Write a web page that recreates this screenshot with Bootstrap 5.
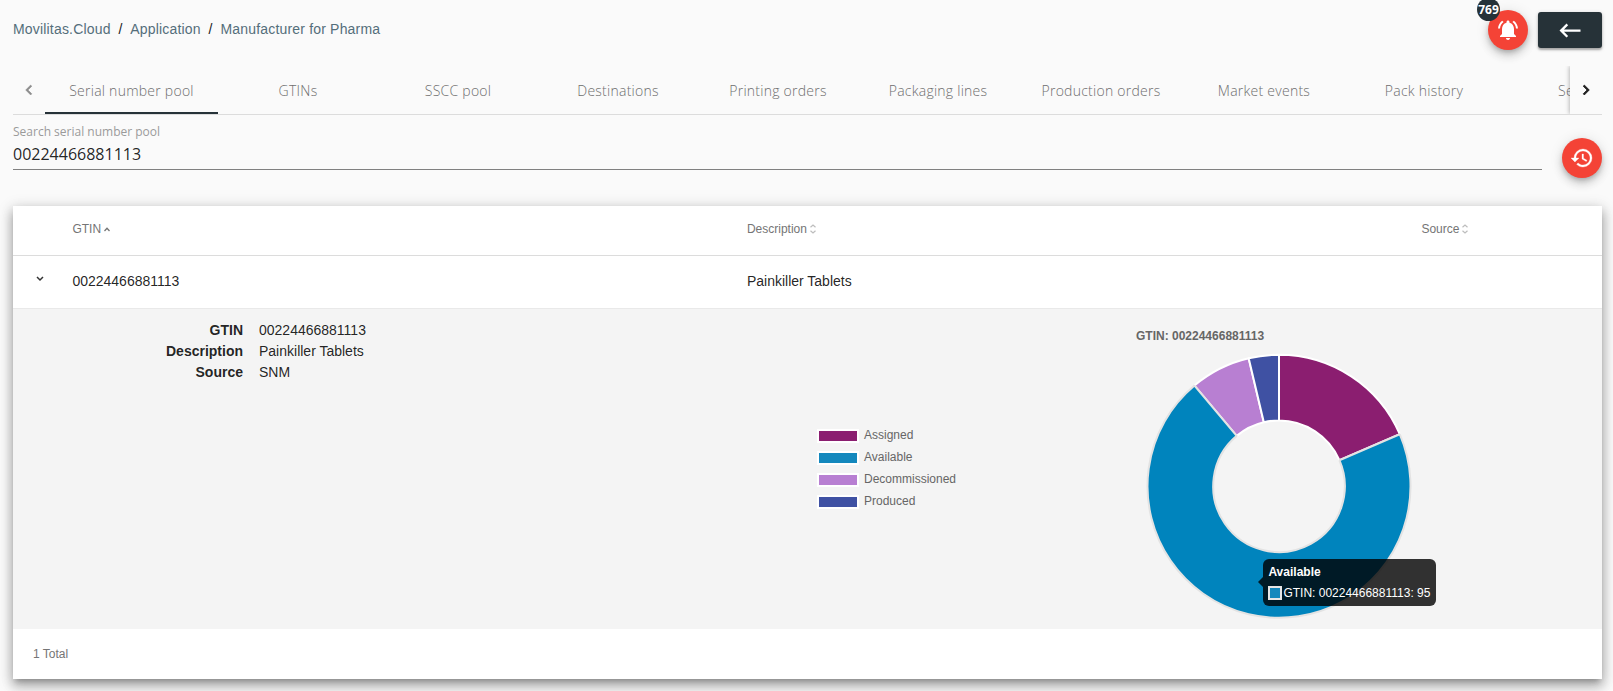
<!DOCTYPE html>
<html lang="en">
<head>
<meta charset="utf-8">
<meta name="viewport" content="width=device-width, initial-scale=1">
<title>Manufacturer for Pharma</title>
<link href="https://cdn.jsdelivr.net/npm/bootstrap@5.3.0/dist/css/bootstrap.min.css" rel="stylesheet">
<style>
  body { background: #fafafa; font-family: "Liberation Sans", Arial, sans-serif; font-size: 14px; line-height: 20px; color: rgba(0,0,0,.87); overflow: hidden; }
  .page { padding: 0 11px 0 13px; height: 691px; }
  .topbar { height: 66px; }
  .crumbs { margin-top: 19px; letter-spacing: .18px; --bs-breadcrumb-divider-color: #212121; --bs-breadcrumb-item-padding-x: 7.8px; font-size: 14px; }
  .crumbs a { color: #546e7a; text-decoration: none; }
  .fab { width: 40px; height: 40px; border-radius: 50%; background: #f44336; color: #fff; border: 0; box-shadow: 0 3px 5px -1px rgba(0,0,0,.2), 0 6px 10px rgba(0,0,0,.14), 0 1px 14px rgba(0,0,0,.1); }
  .fab svg, .back svg, .pager svg { fill: currentColor; display: block; }
  .count { position: absolute; left: -11px; top: -12px; width: 23px; height: 23px; border-radius: 50%; background: #263238; font: 700 12px/23px "Open Sans", sans-serif; color: #fff; text-align: center; }
  .back { width: 64px; height: 36px; margin-top: 12px; border-radius: 3px; background: #263238; color: #fff; border: 0; box-shadow: 0 2px 2px rgba(0,0,0,.25), 0 1px 4px rgba(0,0,0,.18); }
  .tabs { height: 49px; border-bottom: 1px solid #dcdcdc; font-family: "Open Sans", sans-serif; font-size: 14px; }
  .pager { width: 32px; flex: none; }
  .pager-next { box-shadow: -1px 0 4px rgba(0,0,0,.25); background: #fafafa; clip-path: inset(0 0 0 -8px); z-index: 1; }
  .tab-strip { min-width: 0; overflow: hidden; }
  .tab-strip .nav-link { flex: none; width: 160px; padding: 2px 0 0; line-height: 46px; letter-spacing: .25px; text-align: center; color: #6e6e6e; font-weight: 300; white-space: nowrap; }
  .tab-strip .nav-link.active { width: 173px; border-bottom: 2px solid #263238; line-height: 44px; padding-top: 3px; padding-bottom: 0; height: 48px; }
  .tab-strip .nav-link.wide { width: 166px; }
  .search { height: 91px; }
  .field { flex: 1; height: 55px; border-bottom: 1px solid #808080; font-family: "Open Sans", sans-serif; margin-right: 20px; padding-top: 8px; }
  .field label { display: block; font-size: 12px; line-height: 18px; color: #9a9a9a; font-weight: 400; }
  .field input { border: 0; padding: 0; background: none; font-size: 16px; line-height: 24px; height: 24px; color: rgba(0,0,0,.87); width: 100%; display: block; margin-top: 1px; outline: 0; }
  .sheet { background: #fff; height: 473px; box-shadow: 0 5px 5px -3px rgba(0,0,0,.2), 0 8px 10px 1px rgba(0,0,0,.14), 0 3px 14px 2px rgba(0,0,0,.12), 0 4px 12px rgba(0,0,0,.15); }
  .grid-row { display: grid; grid-template-columns: 59.4px 674.5px 674.5px 1fr; }
  .grid-head { height: 50px; border-bottom: 1px solid #dcdcdc; font-size: 12px; line-height: 47px; color: #757575; }
  .grid-head svg { margin-left: 3px; }
  .grid-body { height: 52px; line-height: 51px; }
  .detail { height: 321px; background: #f4f4f4; border-top: 1px solid #e9e9e9; }
  .facts { width: 804px; display: grid; grid-template-columns: 230px 1fr; column-gap: 16px; align-content: start; line-height: 21px; padding-top: 11px; }
  .facts dt { text-align: right; font-weight: 700; }
  .facts dd { margin: 0; }
  .legend { width: 319px; padding-top: 116px; font-size: 12px; line-height: 22px; color: #666; }
  .swatch { width: 42px; height: 14px; border: 2px solid #fff; margin-right: 5px; }
  .legend-text { line-height: 20px; padding-bottom: 2px; }
  .chart { width: 300px; position: relative; padding-top: 18px; }
  .chart-title { font-size: 12px; font-weight: 700; line-height: 18px; color: #666; }
  .chart svg { display: block; margin: 8px 0 0 9px; }
  .tip { position: absolute; left: 127.4px; top: 250px; width: 173px; height: 47px; border-radius: 6px; background: rgba(0,0,0,.8); color: #fff; font-size: 12px; line-height: 14px; padding: 6px 5px; white-space: nowrap; }
  .tip::before { content: ""; position: absolute; left: -5px; top: 18px; border: 5px solid transparent; border-left: 0; border-right-color: rgba(0,0,0,.8); }
  .tip-box { width: 14px; height: 14px; border: 2px solid #e6e6e6; background: #1488bd; margin-right: 1px; }
  .total { height: 50px; font-size: 12px; line-height: 50px; padding-left: 20px; color: #757575; }
</style>
</head>
<body>
<div class="page">
  <header class="topbar d-flex align-items-start">
    <nav class="flex-grow-1"><ol class="breadcrumb crumbs mb-0">
      <li class="breadcrumb-item"><a href="#">Movilitas.Cloud</a></li>
      <li class="breadcrumb-item"><a href="#">Application</a></li>
      <li class="breadcrumb-item"><a href="#">Manufacturer for Pharma</a></li>
    </ol></nav>
    <button class="fab position-relative p-0 d-flex align-items-center justify-content-center" style="margin:10px 10px 0 0" aria-label="Notifications">
      <svg width="24" height="24" viewBox="0 0 24 24"><path d="M7.580 4.080L6.150 2.650C3.750 4.480 2.170 7.300 2.030 10.500h2c.150-2.650 1.510-4.970 3.550-6.420zm12.390 6.420h2c-.150-3.200-1.730-6.020-4.120-7.850l-1.420 1.430c2.020 1.450 3.390 3.770 3.540 6.420zM18 11c0-3.070-1.640-5.640-4.500-6.320V4c0-.830-.670-1.500-1.500-1.500s-1.500.670-1.500 1.500v.680C7.630 5.360 6 7.920 6 11v5l-2 2v1h16v-1l-2-2v-5zm-6 11c.140 0 .270-.010.400-.040.650-.140 1.180-.580 1.440-1.180.100-.240.150-.500.150-.780h-4c.010 1.100.900 2 2.010 2z"/></svg>
      <span class="count">769</span>
    </button>
    <button class="back p-0 d-flex align-items-center justify-content-center" aria-label="Back">
      <svg width="28" height="28" viewBox="0 0 24 24"><path d="M21 11.500H6.830l3.580-3.590L9 6.500l-6 6 6 6 1.410-1.410L6.830 13.500H21z"/></svg>
    </button>
  </header>

  <div class="tabs d-flex">
    <div class="pager d-flex align-items-center justify-content-center" style="color:#8c8c8c">
      <svg width="20" height="20" viewBox="0 0 24 24"><path d="M15.400 7.400 14 6l-6 6 6 6 1.400-1.400-4.600-4.600z" stroke="currentColor" stroke-width=".6"/></svg>
    </div>
    <nav class="tab-strip nav flex-nowrap flex-grow-1">
      <a class="nav-link active" href="#">Serial number pool</a>
      <a class="nav-link" href="#">GTINs</a>
      <a class="nav-link" href="#">SSCC pool</a>
      <a class="nav-link" href="#">Destinations</a>
      <a class="nav-link" href="#">Printing orders</a>
      <a class="nav-link" href="#">Packaging lines</a>
      <a class="nav-link wide" href="#">Production orders</a>
      <a class="nav-link" href="#">Market events</a>
      <a class="nav-link" href="#">Pack history</a>
      <a class="nav-link" href="#">Settings</a>
    </nav>
    <div class="pager pager-next d-flex align-items-center justify-content-center">
      <svg width="20" height="20" viewBox="0 0 24 24"><path d="M8.600 7.400 10 6l6 6-6 6-1.400-1.400 4.600-4.600z" stroke="currentColor" stroke-width=".8"/></svg>
    </div>
  </div>

  <div class="search d-flex">
    <div class="field">
      <label for="q">Search serial number pool</label>
      <input id="q" value="00224466881113">
    </div>
    <button class="fab p-0 d-flex align-items-center justify-content-center" style="margin-top:23px" aria-label="History">
      <svg width="24" height="24" viewBox="0 0 24 24"><path stroke="currentColor" stroke-width=".3" d="M13 3a9 9 0 0 0-9 9H1l3.890 3.890.07.140L9 12H6c0-3.870 3.130-7 7-7s7 3.130 7 7-3.130 7-7 7c-1.930 0-3.680-.790-4.940-2.060l-1.420 1.420C8.270 19.990 10.510 21 13 21a9 9 0 0 0 0-18zm-1 5v5l4.280 2.540.720-1.210-3.500-2.080V8H12z"/></svg>
    </button>
  </div>

  <main class="sheet">
    <div class="grid-row grid-head">
      <span></span>
      <span>GTIN<svg width="6" height="5" viewBox="0 0 6 5" fill="none" stroke="#757575" stroke-width="1.300" style="vertical-align:1px"><path d="M.5 4 3 1.300 5.500 4"/></svg></span>
      <span>Description<svg width="6" height="10" viewBox="0 0 6 10" fill="none" stroke="#bdbdbd" stroke-width="1.200" style="vertical-align:-1px"><path d="M.5 3.300 3 1l2.500 2.300M.5 6.700 3 9l2.500-2.300"/></svg></span>
      <span>Source<svg width="6" height="10" viewBox="0 0 6 10" fill="none" stroke="#bdbdbd" stroke-width="1.200" style="vertical-align:-1px"><path d="M.5 3.300 3 1l2.500 2.300M.5 6.700 3 9l2.500-2.300"/></svg></span>
    </div>
    <div class="grid-row grid-body">
      <span><svg width="8" height="6" viewBox="0 0 8 6" fill="none" stroke="#333" stroke-width="1.500" style="margin-left:22.500px;vertical-align:4px"><path d="M1 1l3 3 3-3"/></svg></span>
      <span>00224466881113</span>
      <span>Painkiller Tablets</span>
      <span></span>
    </div>
    <section class="detail d-flex">
      <dl class="facts mb-0">
        <dt>GTIN</dt><dd>00224466881113</dd>
        <dt>Description</dt><dd>Painkiller Tablets</dd>
        <dt>Source</dt><dd>SNM</dd>
      </dl>
      <div class="legend">
        <div class="d-flex align-items-center"><span class="swatch" style="background:#8b1e70"></span><span class="legend-text">Assigned</span></div>
        <div class="d-flex align-items-center"><span class="swatch" style="background:#1488bd"></span><span class="legend-text">Available</span></div>
        <div class="d-flex align-items-center"><span class="swatch" style="background:#b87fd2"></span><span class="legend-text">Decommissioned</span></div>
        <div class="d-flex align-items-center"><span class="swatch" style="background:#3f51a3"></span><span class="legend-text">Produced</span></div>
      </div>
      <div class="chart">
        <div class="chart-title">GTIN: 00224466881113</div>
        <svg width="268" height="268" viewBox="-134 -133.300 268 268" stroke-width="2" stroke-linejoin="bevel">
          <!-- 25 assigned, 95 available, 10 decommissioned, 5 produced -->
          <path fill="#8b1e70" stroke="#fff" d="M0-131.500A131.500 131.500 0 0 1 120.750-52.080L60.420-26.060A65.800 65.800 0 0 0 0-65.800Z"/>
          <path fill="#b87fd2" stroke="#fff" d="M-84.530-100.730A131.500 131.500 0 0 1-30.320-127.960L-15.170-64.030A65.800 65.800 0 0 0-42.300-50.410Z"/>
          <path fill="#3f51a3" stroke="#fff" d="M-30.320-127.960A131.500 131.500 0 0 1 0-131.500V-65.800A65.800 65.800 0 0 0-15.170-64.030Z"/>
          <path fill="#0084bd" stroke="#e3e3e3" d="M120.750-52.080A131.500 131.500 0 1 1-84.530-100.730L-42.300-50.410A65.800 65.800 0 1 0 60.420-26.060Z"/>
        </svg>
        <div class="tip">
          <div class="fw-bold">Available</div>
          <div class="d-flex align-items-center" style="margin-top:7px"><span class="tip-box"></span>GTIN: 00224466881113: 95</div>
        </div>
      </div>
    </section>
    <footer class="total">1 Total</footer>
  </main>
</div>
<script src="https://cdn.jsdelivr.net/npm/bootstrap@5.3.0/dist/js/bootstrap.bundle.min.js"></script>
</body>
</html>
